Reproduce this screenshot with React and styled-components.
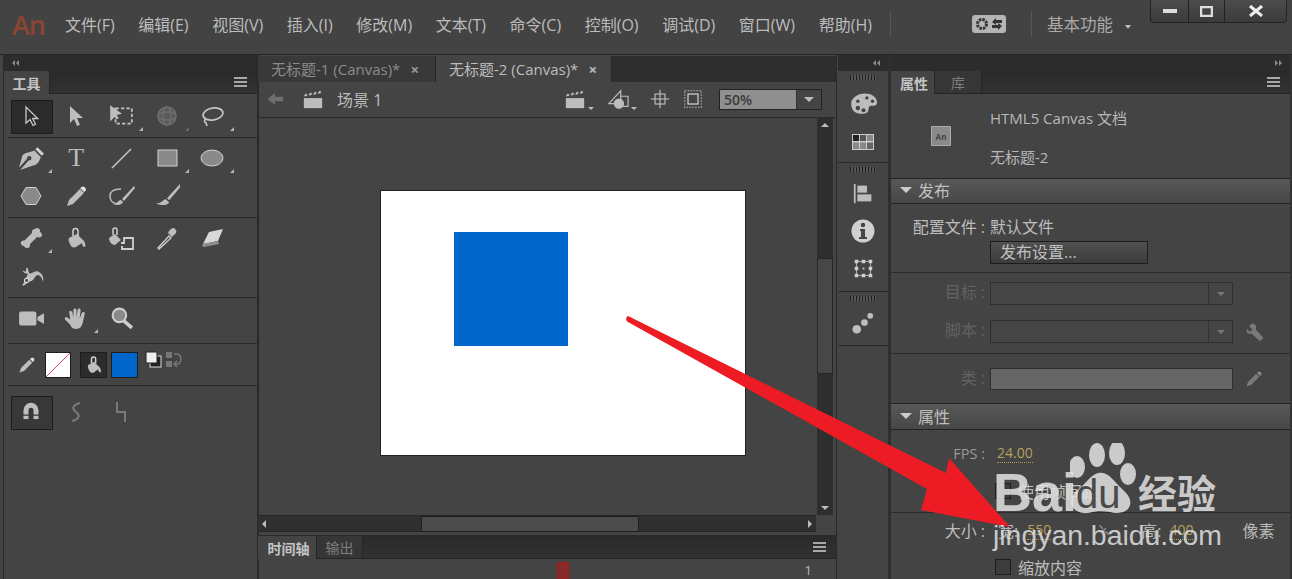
import React from "react";
import styled, { createGlobalStyle } from "styled-components";

const GlobalStyle = createGlobalStyle`
  html, body { margin: 0; padding: 0; background: #444; }
  body { font-family: "Open Sans", "Noto Sans CJK SC", sans-serif; }
  * { box-sizing: border-box; }
`;

const Window = styled.div`
  position: relative;
  width: 1292px;
  height: 579px;
  overflow: hidden;
  background: #444;
  color: #bdbdbd;
`;

/* top menu bar */
const TitleBar = styled.header`
  display: flex;
  align-items: center;
  height: 55px;
  padding: 0 5px 6px 12px;
  background: #434343;
  border-bottom: 1px solid #262626;
`;
const Logo = styled.span`
  width: 53px;
  font: 600 27px "Open Sans", sans-serif;
  letter-spacing: -1px;
  color: #8e4433;
`;
const Menu = styled.nav`
  display: flex;
  gap: 23.6px;
  width: 826px;
  font-size: 16px;
  color: #bcbcbc;
`;
const BarDivider = styled.i`
  width: 1px;
  height: 26px;
  background: #555;
`;
const SyncButton = styled.span`
  display: flex;
  align-items: center;
  justify-content: center;
  width: 34px;
  height: 18px;
  margin: 0 25px 0 81px;
  background: #b5b5b5;
  border-radius: 3px;
`;
const Workspace = styled.span`
  margin-left: 15px;
  width: 103px;
  font-size: 16.5px;
  color: #a9a9a9;
  &::after {
    content: "";
    display: inline-block;
    margin-left: 12px;
    vertical-align: 2px;
    border: 3.5px solid transparent;
    border-top: 4px solid #bbb;
    border-bottom: 0;
  }
`;
const WinControls = styled.div`
  display: flex;
  align-self: flex-start;
  height: 23px;
  margin-left: auto;
  border: 1px solid #222;
  border-top: 0;
  border-radius: 0 0 4px 4px;
  background: linear-gradient(#4c4c4c, #3b3b3b);
`;
const WinButton = styled.span`
  display: flex;
  align-items: center;
  justify-content: center;
  width: ${(p) => p.$w}px;
  border-left: ${(p) => (p.$first ? "0" : "1px solid #222")};
`;

const Main = styled.div`
  display: flex;
  height: 524px;
`;

/* shared panel chrome */
const Strip = styled.div`
  display: flex;
  align-items: center;
  justify-content: ${(p) => (p.$end ? "flex-end" : "flex-start")};
  gap: 1px;
  height: 16px;
  padding: 0 8px;
  background: #2c2c2c;
`;
const TabRow = styled.div`
  display: flex;
  align-items: stretch;
  height: 23px;
  background: linear-gradient(#2a2a2a, #323232);
  border-bottom: 1px solid #262626;
`;
const PanelTab = styled.span`
  display: flex;
  align-items: center;
  justify-content: center;
  width: ${(p) => p.$w}px;
  padding-left: ${(p) => p.$pl || 0}px;
  margin-bottom: ${(p) => (p.$on ? "-1px" : "0")};
  font-size: 14px;
  font-weight: ${(p) => (p.$on ? 700 : 400)};
  color: ${(p) => (p.$on ? "#c4c4c4" : "#7e7e7e")};
  background: ${(p) => (p.$on ? "#444" : "#363636")};
  border-right: 1px solid #262626;
`;
const MenuLines = styled.i`
  align-self: center;
  width: 13px;
  height: 10px;
  margin: 0 10px 0 auto;
  background: repeating-linear-gradient(#a8a8a8 0 2px, transparent 2px 4px);
`;

/* tools panel */
const ToolsPanel = styled.aside`
  width: 256px;
  margin-left: 3px;
  border-right: 2px solid #2a2a2a;
  border-left: 1px solid #2a2a2a;
`;
const ToolGroup = styled.section`
  display: grid;
  grid-template-columns: repeat(5, 45.4px);
  grid-auto-rows: 38px;
  height: ${(p) => p.$h}px;
  padding-top: ${(p) => p.$pt}px;
  margin-left: 4px;
  border-bottom: ${(p) => (p.$last ? "0" : "1px solid #2a2a2a")};
`;
const ToolCell = styled.span`
  position: relative;
  display: flex;
  align-items: center;
  justify-content: center;
  opacity: ${(p) => (p.$dim ? 0.35 : 1)};
  &::before {
    content: "";
    display: ${(p) => (p.$active ? "block" : "none")};
    position: absolute;
    left: 2.7px;
    top: 3px;
    width: 40px;
    height: 32px;
    background: ${(p) => (p.$active === "soft" ? "#383838" : "#2b2b2b")};
    border: 1px solid #1c1c1c;
  }
  &::after {
    content: "";
    display: ${(p) => (p.$corner ? "block" : "none")};
    position: absolute;
    right: 1px;
    bottom: 4px;
    border-left: 4px solid transparent;
    border-bottom: 4px solid #b5b5b5;
  }
  svg, b { position: relative; }
`;
const LetterT = styled.b`
  font: 400 26px "Liberation Serif", serif;
  color: #bcbcbc;
`;
const ColorRow = styled.section`
  display: flex;
  align-items: center;
  height: 42px;
  padding-left: 10px;
  margin-left: 4px;
  border-bottom: 1px solid #2a2a2a;
`;
const Swatch = styled.span`
  display: flex;
  align-items: center;
  justify-content: center;
  width: ${(p) => p.$w || 27}px;
  height: 26px;
  margin-left: ${(p) => p.$ml || 0}px;
  background: ${(p) => p.$bg};
  border: 1px solid #1d1d1d;
`;
const SmallIcons = styled.span`
  display: flex;
  gap: 3px;
  margin: -10px 0 0 7px;
`;

/* document column */
const DocColumn = styled.main`
  display: flex;
  flex-direction: column;
  width: 579px;
  margin-left: -1px;
  border-right: 1px solid #2a2a2a;
`;
const DocTabs = styled.div`
  display: flex;
  height: 26px;
  margin-top: 1px;
  background: #2e2e2e;
`;
const DocTab = styled.span`
  display: flex;
  align-items: center;
  width: ${(p) => p.$w}px;
  padding-left: 13px;
  font-size: 15px;
  white-space: nowrap;
  color: ${(p) => (p.$on ? "#bdbdbd" : "#8b8b8b")};
  background: ${(p) => (p.$on ? "#444" : "#393939")};
  border-right: 1px solid #262626;
  b { margin-left: 10px; font-size: 15px; color: ${(p) => (p.$on ? "#bbb" : "#999")}; }
`;
const DocToolbar = styled.div`
  display: flex;
  align-items: center;
  height: 36px;
  padding: 0 14px 0 8px;
  border-bottom: 1px solid #2a2a2a;
`;
const SceneClapper = styled.span`
  display: flex;
  margin-left: 18px;
`;
const SceneName = styled.span`
  margin-left: 13px;
  font-size: 16px;
  color: #bdbdbd;
`;
const ToolbarRight = styled.div`
  display: flex;
  align-items: center;
  gap: 13px;
  margin-left: auto;
`;
const WithCaret = styled.span`
  display: flex;
  align-items: flex-end;
  gap: 2px;
  padding-bottom: 1px;
`;
const Zoom = styled.div`
  display: flex;
  width: 103px;
  height: 21px;
  margin-left: 3px;
  border: 1px solid #222;
`;
const ZoomValue = styled.span`
  flex: 1;
  padding-left: 4px;
  font-size: 14px;
  line-height: 19px;
  font-weight: 600;
  color: #3a3a3a;
  background: #8f8f8f;
`;
const ZoomDrop = styled.span`
  display: flex;
  align-items: center;
  justify-content: center;
  width: 25px;
  background: #444;
  border-left: 1px solid #333;
`;
const Tri = styled.i`
  width: 0;
  height: 0;
  border: ${(p) => p.$s || 4}px solid transparent;
  ${(p) => `border-${p.$dir || "top"}-color: ${p.$c || "#bbb"};`}
  border-${(p) => ({ top: "bottom", bottom: "top", left: "right", right: "left" }[p.$dir || "top"])}-width: 0;
`;
const CanvasRow = styled.div`
  display: flex;
  height: 399px;
`;
const Stage = styled.div`
  flex: 1;
  padding: 72px 0 0 122px;
`;
const Artboard = styled.div`
  width: 366px;
  height: 266px;
  padding: 41px 0 0 73px;
  background: #fff;
  border: 1px solid #222;
`;
const BlueSquare = styled.div`
  width: 114px;
  height: 114px;
  background: #0066cc;
`;
const VScroll = styled.div`
  display: flex;
  flex-direction: column;
  align-items: center;
  justify-content: space-between;
  width: 19px;
  padding: 5px 3px 5px 0;
  background: linear-gradient(90deg, #2e2e2e 0 16px, #444 16px);
`;
const VThumb = styled.div`
  width: 16px;
  height: 116px;
  margin: 131px 0 auto;
  background: #474747;
  border: 1px solid #262626;
`;
const HScrollRow = styled.div`
  display: flex;
  height: 17px;
`;
const HScroll = styled.div`
  display: flex;
  align-items: center;
  justify-content: space-between;
  width: 558px;
  padding: 0 4px;
  background: #303030;
  border-top: 1px solid #262626;
  border-bottom: 1px solid #262626;
`;
const HThumb = styled.div`
  width: 218px;
  height: 16px;
  margin: 0 auto 0 155px;
  background: #4c4c4c;
  border: 1px solid #1e1e1e;
`;
const Timeline = styled.div`
  margin-top: 3px;
  border-top: 1px solid #2a2a2a;
`;
const Ruler = styled.div`
  display: flex;
  justify-content: space-between;
  height: 20px;
  padding: 2px 24px 0 299px;
  font-size: 13px;
  color: #bbb;
`;
const PlayHead = styled.i`
  width: 12px;
  height: 18px;
  margin-top: 1px;
  background: #862a2a;
  border: 2px solid #982222;
`;

/* icon dock */
const Dock = styled.div`
  width: 53px;
  margin-left: 1px;
  border-right: 3px solid #2f2f2f;
`;
const DockGroup = styled.section`
  display: flex;
  flex-direction: column;
  align-items: center;
  height: ${(p) => p.$h}px;
  padding-top: 4px;
  gap: ${(p) => p.$gap || 0}px;
  border-bottom: 1px solid #2a2a2a;
`;
const Gripper = styled.i`
  width: 26px;
  height: 5px;
  margin-bottom: ${(p) => p.$mb}px;
  background: repeating-linear-gradient(90deg, #1d1d1d 0 1px, #555 1px 3px);
`;

/* properties panel */
const Props = styled.aside`
  flex: 1;
  border-right: 2px solid #333;
`;
const DocInfo = styled.div`
  display: flex;
  align-items: center;
  height: 84px;
  padding-left: 40px;
`;
const DocBadge = styled.span`
  display: flex;
  align-items: center;
  justify-content: center;
  width: 20px;
  height: 20px;
  font: 700 8px "Open Sans", sans-serif;
  color: #444;
  background: #8a8a8a;
  border: 1px solid #aaa;
`;
const DocInfoText = styled.div`
  display: flex;
  flex-direction: column;
  gap: 20px;
  margin-left: 39px;
  padding-top: 3px;
  font-size: 15px;
  line-height: 19px;
  color: #b8b8b8;
`;
const SectionHead = styled.h3`
  display: flex;
  align-items: center;
  gap: 6px;
  height: ${(p) => p.$h}px;
  margin: 0;
  padding: 0 0 2px 9px;
  font-size: 16px;
  font-weight: 400;
  color: #c0c0c0;
  background: linear-gradient(#585858, #474747);
  border-top: 1px solid #222;
  border-bottom: 1px solid #222;
`;
const Block = styled.div`
  height: ${(p) => p.$h}px;
  padding-top: ${(p) => p.$pt || 0}px;
  border-bottom: ${(p) => (p.$open ? "0" : "1px solid #2b2b2b")};
`;
const Row = styled.div`
  display: flex;
  align-items: center;
  height: ${(p) => p.$h || 22}px;
  margin-bottom: ${(p) => p.$mb || 0}px;
  font-size: 16px;
  color: #bdbdbd;
`;
const labelColors = { off: "#626262", mid: "#9a9a9a", on: "#bdbdbd" };
const Label = styled.span`
  width: 94px;
  margin-right: 5px;
  padding-bottom: ${(p) => (p.$tone === "off" ? 5 : 0)}px;
  text-align: right;
  white-space: nowrap;
  font-size: ${(p) => (p.$tone === "mid" ? 14.5 : 16)}px;
  color: ${(p) => labelColors[p.$tone || "on"]};
`;
const PubButton = styled.span`
  width: 158px;
  height: 23px;
  padding-left: 9px;
  font-size: 16px;
  line-height: 21px;
  color: #c0c0c0;
  background: linear-gradient(#505050, #3c3c3c);
  border: 1px solid #1c1c1c;
`;
const Select = styled.span`
  display: flex;
  justify-content: flex-end;
  width: 243px;
  height: 23px;
  background: #454545;
  border: 1px solid #2e2e2e;
`;
const SelectDrop = styled.span`
  display: flex;
  align-items: center;
  justify-content: center;
  width: 24px;
  border-left: 1px solid #333;
`;
const ClassInput = styled.span`
  width: 243px;
  height: 22px;
  background: #666;
  border: 1px solid #2e2e2e;
`;
const RowIcon = styled.span`
  display: flex;
  margin-left: 12px;
  opacity: 0.45;
`;
const Value = styled.span`
  font-size: 14px;
  color: #b5a15f;
  border-bottom: 1px dotted #b39a55;
  margin-left: ${(p) => p.$ml || 0}px;
`;
const Check = styled.i`
  width: 16px;
  height: 16px;
  margin: 0 7px 0 5px;
  background: #3c3c3c;
  border: 1px solid #1e1e1e;
`;
const SizeText = styled.span`
  display: flex;
  margin-left: ${(p) => p.$ml || 0}px;
  color: #b8b8b8;
`;

/* overlays: the arrow and the watermark lie over the screenshot */
const ArrowLayer = styled.svg`
  position: absolute;
  inset: 0;
  pointer-events: none;
`;
const Mark = styled.div`
  position: absolute;
  left: 993px;
  top: 443px;
  width: 240px;
  height: 110px;
  color: rgba(226, 226, 226, 0.86);
  pointer-events: none;
`;
const MarkTop = styled.div`
  display: flex;
  align-items: flex-start;
  height: 74px;
  padding-top: 21px;
  font-family: "Liberation Sans", sans-serif;
  font-weight: 700;
`;
const MarkBai = styled.span`
  width: 80px;
  font-size: 54px;
  line-height: 56px;
`;
const Paw = styled.svg`
  position: absolute;
  left: 77px;
  top: 0;
`;
const MarkDu = styled.span`
  position: relative;
  width: 62px;
  margin-left: 3px;
  padding-top: 10px;
  font-size: 40px;
  line-height: 40px;
  font-weight: 400;
  color: #4a4a4a;
`;
const MarkCn = styled.span`
  font: 700 39px/54px "Noto Sans CJK SC", sans-serif;
  white-space: nowrap;
`;
const MarkUrl = styled.div`
  font: 400 28.4px/36px "Liberation Sans", sans-serif;
  white-space: nowrap;
`;

/* drawings */
const Svg = styled.svg.attrs((p) => ({ viewBox: p.$vb || "0 0 24 24" }))`
  width: ${(p) => p.$w || 24}px;
  height: ${(p) => p.$h || p.$w || 24}px;
  fill: ${(p) => p.$f || "#bdbdbd"};
  stroke: ${(p) => p.$st || "none"};
  flex: none;
`;

const SelectionIcon = () => <Svg $f="none" $st="#c8c8c8" strokeWidth="1.3"><path d="M7 3v16l4-3.500 3 6 2.500-1.200-2.800-5.800h5z" /></Svg>;
const SubselectIcon = () => <Svg><path d="M6 2v17l4-4 3 7 3-1.200-3-6.800h6z" /></Svg>;
const FreeTransformIcon = () => (
  <Svg $w={26}>
    <rect x="7" y="5" width="15" height="14" fill="none" stroke="#c4c4c4" strokeWidth="1.6" strokeDasharray="3 2" />
    <path d="M2 2v15l4-4 2 2 2-1-2-3 5-1z" />
  </Svg>
);
const RotateIcon = () => (
  <Svg $f="none" $st="#bbb" strokeWidth="1.5">
    <circle cx="12" cy="12" r="9" fill="#bbb" fillOpacity=".5" />
    <ellipse cx="12" cy="12" rx="9" ry="4" />
    <ellipse cx="12" cy="12" rx="4" ry="9" />
  </Svg>
);
const LassoIcon = () => (
  <Svg $f="none" $st="#c4c4c4" strokeWidth="1.7">
    <ellipse cx="13" cy="10" rx="10" ry="6" transform="rotate(-10 13 10)" />
    <path d="M6 15c-2 1-2 3 0 4l1 3" />
  </Svg>
);
const PenIcon = () => (
  <Svg $w={26}>
    <path d="M18 2l6 6-2 2-6-6z" fill="#d0d0d0" />
    <path fillRule="evenodd" d="M15 5l6 6c-1 4-3 7-7 8l-12 4 8-9a2 2 0 1 0-1.500-1.500L1 21l3-11c1-3 7-3 11-5z" />
  </Svg>
);
const LineIcon = () => <Svg $f="none" $st="#bdbdbd" strokeWidth="1.7"><path d="M3 22L22 3" /></Svg>;
const RectIcon = () => <Svg><rect x="3" y="4" width="19" height="16" fill="#8a8a8a" stroke="#cfcfcf" /></Svg>;
const OvalIcon = () => <Svg><ellipse cx="12" cy="12" rx="11" ry="8" fill="#8a8a8a" stroke="#cfcfcf" /></Svg>;
const HexIcon = () => <Svg><path d="M7 3.500h10l5 8.500-5 8.500H7L2 12z" fill="#8a8a8a" stroke="#cfcfcf" /></Svg>;
const PencilIcon = () => <Svg><path d="M16 5l4 4L9 20l-6 2 2-6z" /><path d="M17 3.500a2 2 0 0 1 4 4l-1 .500-4-4z" fill="#e0e0e0" /></Svg>;
const ArtBrushIcon = () => (
  <Svg $w={28} $vb="0 0 28 24">
    <path d="M27 2L15 15l2 2L28 4zM14 16c-2 0-3 2-5 3-1 .500-3 1-3 1 4 2 9 1 10-2z" />
    <path d="M14 5C8 5 3 7 3 12s3 7 5 7" fill="none" stroke="#bdbdbd" strokeWidth="1.500" />
  </Svg>
);
const BrushIcon = () => (
  <Svg $w={26}>
    <path d="M24 1L12 14l2 2L25 3zM11 15c-2 0-3 2-5 3-1 .500-4 1-4 1 4 2 10 2 12-1z" />
  </Svg>
);
const BoneIcon = () => (
  <Svg><path d="M16 3a3 3 0 0 1 5 3 3 3 0 0 1 1 5c-2 1-3 0-4 0l-7 7c0 2 0 4-3 4a3 3 0 0 1-3-2 3 3 0 0 1-3-4c1-2 3-1 4-2l7-7c0-1-1-3 3-4z" /></Svg>
);
const BucketIcon = () => (
  <Svg>
    <path d="M5 12l8-4 7 7c1 2 2 4 1 6-2 0-3-2-3-4l-6 4c-3 1-5 0-6-3-1-2-2-4-1-6z" />
    <path d="M9 10V5a2.500 2.500 0 0 1 5 0v5" fill="none" stroke="#d0d0d0" strokeWidth="1.500" />
  </Svg>
);
const InkIcon = () => (
  <Svg $w={28} $vb="0 0 28 24">
    <path d="M2 12l6-4 6 6-6 5c-3 0-6-3-6-7z" />
    <path d="M6 9V4a2 2 0 0 1 4 0v5" fill="none" stroke="#d0d0d0" strokeWidth="1.500" />
    <path d="M14 17h3v-5h9v11H15v-3" fill="none" stroke="#cfcfcf" strokeWidth="1.800" />
  </Svg>
);
const DropperIcon = () => (
  <Svg>
    <path d="M3 22l11-12 2 2L4 23z" fill="none" stroke="#d0d0d0" strokeWidth="1.300" />
    <path d="M13 7l4 4 2-2 1-1a3 3 0 0 0-4-5l-2 2z" />
  </Svg>
);
const EraserIcon = () => (
  <Svg>
    <path d="M9 6l14-3-5 12-15 3z" fill="#d8d8d8" />
    <path d="M3 18l15-3 1 3-15 3-2-1z" fill="#8e8e8e" />
  </Svg>
);
const WidthIcon = () => (
  <Svg $w={26}>
    <path d="M8 4c2 1 1 4 3 6 3-1 5-3 8-2 4 2 5 6 4 9-1-3-2-6-5-6-3 1-3 6-8 6-2 2-3 3-5 4l-1-1 3-4c0-3 2-4 2-6-2 0-4-1-5-3l3 1z" />
    <circle cx="8" cy="16" r="2" fill="#444" stroke="#e0e0e0" />
  </Svg>
);
const CameraIcon = () => (
  <Svg $w={26}><rect x="1" y="6" width="16" height="13" rx="2" /><path d="M18 11l7-4v11l-7-4z" /></Svg>
);
const HandIcon = () => (
  <Svg $w={25}>
    <path d="M5 6c0-2 2-2 3 0l1 5V4c0-2 3-2 3 0v7l1-7c0-2 3-2 3 0l-1 8 2-5c1-2 3-1 3 0l-2 9c-1 4-3 6-6 6s-5-1-6-4l-5-5c-1-2 1-3 2-2l3 2z" />
  </Svg>
);
const ZoomIcon = () => (
  <Svg $w={25}>
    <circle cx="10" cy="9" r="6.500" fill="#8a8a8a" stroke="#cdcdcd" strokeWidth="2" />
    <path d="M14 14l8 7" stroke="#cdcdcd" strokeWidth="3.500" />
  </Svg>
);
const MagnetIcon = () => (
  <Svg $w={20}>
    <path d="M3 15v-5a9 9 0 0 1 18 0v5h-6v-5a3 3 0 0 0-6 0v5z" />
    <rect x="3" y="16.500" width="6" height="4" /><rect x="15" y="16.500" width="6" height="4" />
  </Svg>
);
const SmoothIcon = () => <Svg $f="none" $st="#7b7b7b" strokeWidth="2"><path d="M16 3C8 5 8 9 12 12s4 7-4 9" /></Svg>;
const StraightenIcon = () => <Svg $f="none" $st="#7b7b7b" strokeWidth="2"><path d="M8 2v10h8v10" /></Svg>;
const StrokePencil = () => <Svg $w={18}><path d="M15 5l4 4L8 20l-6 2 2-6z" /><path d="M17 3a2.500 2.500 0 0 1 4 4l-1 1-4-4z" fill="#e0e0e0" /></Svg>;
const SmallBucket = () => <Svg $w={20}><path d="M5 12l7-4 7 7c1 2 2 4 1 6-2 0-3-2-3-4l-5 4c-3 1-5 0-6-3-1-2-2-4-1-6z" /><path d="M9 10V5a2.500 2.500 0 0 1 5 0v5" fill="none" stroke="#d0d0d0" strokeWidth="1.800" /></Svg>;
const DefaultColors = () => (
  <Svg $w={17} $vb="0 0 17 17">
    <rect x="5" y="5" width="11" height="11" fill="#222" stroke="#ddd" />
    <rect x="1" y="1" width="11" height="11" fill="#eee" stroke="#222" />
  </Svg>
);
const SwapColors = () => (
  <Svg $w={17} $vb="0 0 17 17" $f="#777">
    <rect x="1" y="1" width="6" height="6" /><rect x="1" y="10" width="6" height="6" />
    <path d="M9 3h3c5 0 5 10 0 10H10M12 10l-3 3 3 3" fill="none" stroke="#777" strokeWidth="1.500" />
  </Svg>
);
const BackIcon = () => <Svg $w={18} $f="#6f6f6f"><path d="M2 12l10-8v5h11v6H12v5z" /></Svg>;
const Clapper = ({ w = 22 }) => (
  <Svg $w={w}>
    <path d="M2 11h20v11H2z" /><path d="M2 9l2-3 2 1-1 2zm5-1l2-3 2 1-1 2zm5-1l2-3 2 1-1 2zm5-1l2-3 2 1-1 2z" />
  </Svg>
);
const ObjectIcon = () => (
  <Svg $w={22} $f="none" $st="#bdbdbd" strokeWidth="1.300">
    <path d="M2 17L15 3v14zM15 9h8v11h-8" /><circle cx="13" cy="17" r="5" fill="#bdbdbd" />
  </Svg>
);
const CenterIcon = () => (
  <Svg $w={20} $f="none" $st="#c4c4c4" strokeWidth="1.300"><rect x="6" y="6" width="12" height="12" /><path d="M12 1v22M1 12h22" /></Svg>
);
const ClipIcon = () => (
  <Svg $w={20} $f="none" $st="#9a9a9a" strokeWidth="1.500">
    <rect x="2" y="2" width="20" height="20" strokeDasharray="2 1.500" />
    <rect x="6" y="6" width="12" height="12" stroke="#d0d0d0" />
  </Svg>
);
const PaletteIcon = () => (
  <Svg $w={27}>
    <path d="M13 3c6 0 11 3 11 8 0 3-3 3-5 3-3 0-2 3-3 5s-4 2-7 2C4 21 1 17 1 12s6-9 12-9z" />
    <g fill="#444"><circle cx="7" cy="16" r="2" /><circle cx="12" cy="18" r="1.800" /><circle cx="7" cy="10" r="1.500" /><circle cx="15" cy="7" r="1.500" /><circle cx="20" cy="10" r="1.500" /></g>
  </Svg>
);
const SwatchIcon = () => (
  <Svg $w={22} $vb="0 0 22 16" $h={16}>
    <rect width="22" height="16" fill="#ccc" />
    <rect x="1" y="1" width="6" height="6" fill="#222" /><rect x="8" y="1" width="6" height="6" fill="#555" /><rect x="15" y="1" width="6" height="6" fill="#888" />
    <rect x="1" y="8.500" width="6" height="6.500" fill="#888" /><rect x="8" y="8.500" width="6" height="6.500" fill="#888" /><rect x="15" y="8.500" width="6" height="6.500" fill="#666" />
  </Svg>
);
const AlignIcon = () => (
  <Svg $w={21}><rect x="1" y="1" width="2" height="22" /><rect x="5" y="3" width="11" height="8" /><rect x="5" y="13" width="16" height="8" /></Svg>
);
const InfoIcon = () => (
  <Svg $w={24}>
    <circle cx="12" cy="12" r="11.500" fill="#d0d0d0" />
    <circle cx="12" cy="6" r="2.200" fill="#444" /><path d="M9 10h5v8h2v2H8v-2h2v-6H9z" fill="#444" />
  </Svg>
);
const TransformIcon = () => (
  <Svg $w={21} $f="#cfcfcf">
    <rect x="4" y="4" width="16" height="16" fill="none" stroke="#bbb" />
    <rect x="2" y="2" width="4" height="4" /><rect x="10" y="2" width="4" height="4" /><rect x="18" y="2" width="4" height="4" />
    <rect x="2" y="10" width="4" height="4" /><rect x="18" y="10" width="4" height="4" /><rect x="11" y="11" width="2" height="2" />
    <rect x="2" y="18" width="4" height="4" /><rect x="10" y="18" width="4" height="4" /><rect x="18" y="18" width="4" height="4" />
  </Svg>
);
const DotsIcon = () => (
  <Svg $w={23}><circle cx="5" cy="19" r="4.500" /><circle cx="13" cy="12" r="3.500" /><circle cx="19" cy="5" r="3" /></Svg>
);
const WrenchIcon = () => (
  <Svg $w={20}><path d="M8 2L5 5l4 4-3 3-4-4c-1 4 2 7 6 6l10 9 4-4-9-10c1-4-1-8-5-7z" /></Svg>
);
const LinkIcon = () => (
  <Svg $w={14} $f="none" $st="#8f8f8f" strokeWidth="2.500"><path d="M4 4l6 6M14 14l6 6M9 15l6-6" /></Svg>
);
const SyncIcon = () => (
  <Svg $w={28} $h={14} $vb="0 0 28 14" $f="#333">
    <circle cx="7" cy="7" r="4.500" fill="none" stroke="#333" strokeWidth="3" strokeDasharray="2.500 1" />
    <path d="M17 5l4-4v2h6v3h-6v2zM27 9l-4 4v-2h-6V8h6V6z" />
  </Svg>
);

const Tool = ({ children, corner, active, dim }) => (
  <ToolCell $corner={corner} $active={active} $dim={dim}>{children}</ToolCell>
);

const Chevrons = ({ dir }) => (
  <>
    <Tri $dir={dir} $s={3} $c="#8c8c8c" />
    <Tri $dir={dir} $s={3} $c="#8c8c8c" />
  </>
);

const menuItems = ["文件(F)", "编辑(E)", "视图(V)", "插入(I)", "修改(M)", "文本(T)", "命令(C)", "控制(O)", "调试(D)", "窗口(W)", "帮助(H)"];

export default function App() {
  return (
    <Window>
      <GlobalStyle />
      <TitleBar>
        <Logo>An</Logo>
        <Menu>{menuItems.map((m) => <span key={m}>{m}</span>)}</Menu>
        <BarDivider />
        <SyncButton><SyncIcon /></SyncButton>
        <BarDivider />
        <Workspace>基本功能</Workspace>
        <WinControls>
          <WinButton $w={37} $first><Svg $w={14} $h={4} $vb="0 0 14 4" $f="#ddd"><rect width="14" height="4" /></Svg></WinButton>
          <WinButton $w={36}><Svg $w={13} $h={11} $vb="0 0 13 11" $f="none" $st="#ddd" strokeWidth="2.500"><rect x="1" y="1" width="11" height="9" /></Svg></WinButton>
          <WinButton $w={62}><Svg $w={14} $h={12} $vb="0 0 14 12" $f="none" $st="#eee" strokeWidth="3"><path d="M1 1l12 10M13 1L1 11" /></Svg></WinButton>
        </WinControls>
      </TitleBar>

      <Main>
        <ToolsPanel>
          <Strip><Chevrons dir="right" /></Strip>
          <TabRow>
            <PanelTab $w={46} $on>工具</PanelTab>
            <MenuLines />
          </TabRow>
          <ToolGroup $h={44} $pt={3}>
            <Tool active="dark"><SelectionIcon /></Tool>
            <Tool><SubselectIcon /></Tool>
            <Tool corner><FreeTransformIcon /></Tool>
            <Tool corner dim><RotateIcon /></Tool>
            <Tool corner><LassoIcon /></Tool>
          </ToolGroup>
          <ToolGroup $h={80} $pt={1}>
            <Tool corner><PenIcon /></Tool>
            <Tool><LetterT>T</LetterT></Tool>
            <Tool><LineIcon /></Tool>
            <Tool corner><RectIcon /></Tool>
            <Tool corner><OvalIcon /></Tool>
            <Tool><HexIcon /></Tool>
            <Tool><PencilIcon /></Tool>
            <Tool><ArtBrushIcon /></Tool>
            <Tool><BrushIcon /></Tool>
          </ToolGroup>
          <ToolGroup $h={80} $pt={1}>
            <Tool corner><BoneIcon /></Tool>
            <Tool><BucketIcon /></Tool>
            <Tool><InkIcon /></Tool>
            <Tool><DropperIcon /></Tool>
            <Tool><EraserIcon /></Tool>
            <Tool><WidthIcon /></Tool>
          </ToolGroup>
          <ToolGroup $h={46} $pt={1}>
            <Tool><CameraIcon /></Tool>
            <Tool corner><HandIcon /></Tool>
            <Tool><ZoomIcon /></Tool>
          </ToolGroup>
          <ColorRow>
            <StrokePencil />
            <Swatch $bg="linear-gradient(to top left, #fff 48%, #e0405a 48%, #e0405a 52%, #fff 52%)" $w={26} $ml={9} />
            <Swatch $bg="#2c2c2c" $ml={9}><SmallBucket /></Swatch>
            <Swatch $bg="#0066cc" $ml={4} />
            <SmallIcons><DefaultColors /><SwapColors /></SmallIcons>
          </ColorRow>
          <ToolGroup $h={60} $pt={7} $last>
            <Tool active="soft"><MagnetIcon /></Tool>
            <Tool><SmoothIcon /></Tool>
            <Tool><StraightenIcon /></Tool>
          </ToolGroup>
        </ToolsPanel>

        <DocColumn>
          <DocTabs>
            <DocTab $w={178}>无标题-1 (Canvas)*<b>×</b></DocTab>
            <DocTab $w={176} $on>无标题-2 (Canvas)*<b>×</b></DocTab>
          </DocTabs>
          <DocToolbar>
            <BackIcon />
            <SceneClapper><Clapper /></SceneClapper>
            <SceneName>场景 1</SceneName>
            <ToolbarRight>
              <WithCaret><Clapper /><Tri $s={3} /></WithCaret>
              <WithCaret><ObjectIcon /><Tri $s={3} /></WithCaret>
              <CenterIcon />
              <ClipIcon />
              <Zoom>
                <ZoomValue>50%</ZoomValue>
                <ZoomDrop><Tri $s={5} /></ZoomDrop>
              </Zoom>
            </ToolbarRight>
          </DocToolbar>
          <CanvasRow>
            <Stage>
              <Artboard><BlueSquare /></Artboard>
            </Stage>
            <VScroll>
              <Tri $dir="bottom" $s={4} />
              <VThumb />
              <Tri $dir="top" $s={4} />
            </VScroll>
          </CanvasRow>
          <HScrollRow>
            <HScroll>
              <Tri $dir="right" $s={4} />
              <HThumb />
              <Tri $dir="left" $s={4} />
            </HScroll>
          </HScrollRow>
          <Timeline>
            <TabRow>
              <PanelTab $w={59} $pl={3} $on>时间轴</PanelTab>
              <PanelTab $w={46}>输出</PanelTab>
              <MenuLines />
            </TabRow>
            <Ruler>
              <PlayHead />
              <span>1</span>
            </Ruler>
          </Timeline>
        </DocColumn>

        <Dock>
          <Strip $end><Chevrons dir="right" /></Strip>
          <DockGroup $h={92} $gap={17}>
            <Gripper $mb={-7} />
            <PaletteIcon />
            <SwatchIcon />
          </DockGroup>
          <DockGroup $h={129} $gap={15}>
            <Gripper $mb={-4} />
            <AlignIcon />
            <InfoIcon />
            <TransformIcon />
          </DockGroup>
          <DockGroup $h={54} $gap={6}>
            <Gripper $mb={4} />
            <DotsIcon />
          </DockGroup>
        </Dock>

        <Props>
          <Strip $end><Chevrons dir="left" /></Strip>
          <TabRow>
            <PanelTab $w={44} $pl={3} $on>属性</PanelTab>
            <PanelTab $w={47}>库</PanelTab>
            <MenuLines />
          </TabRow>
          <DocInfo>
            <DocBadge>An</DocBadge>
            <DocInfoText>
              <span>HTML5 Canvas 文档</span>
              <span>无标题-2</span>
            </DocInfoText>
          </DocInfo>
          <SectionHead $h={26}><Tri $s={6} $c="#ccc" />发布</SectionHead>
          <Block $h={69} $pt={12}>
            <Row $h={20} $mb={5}><Label>配置文件 :</Label>默认文件</Row>
            <Row $h={23}><Label /><PubButton>发布设置...</PubButton></Row>
          </Block>
          <Block $h={81} $pt={9}>
            <Row $h={23} $mb={15}>
              <Label $tone="off">目标 :</Label>
              <Select><SelectDrop><Tri $c="#777" /></SelectDrop></Select>
            </Row>
            <Row $h={23}>
              <Label $tone="off">脚本 :</Label>
              <Select><SelectDrop><Tri $c="#777" /></SelectDrop></Select>
              <RowIcon><WrenchIcon /></RowIcon>
            </Row>
          </Block>
          <Block $h={49} $pt={14} $open>
            <Row $h={22}>
              <Label $tone="off">类 :</Label>
              <ClassInput />
              <RowIcon><StrokePencil /></RowIcon>
            </Row>
          </Block>
          <SectionHead $h={27}><Tri $s={6} $c="#ccc" />属性</SectionHead>
          <Block $h={83} $pt={13}>
            <Row $h={20} $mb={18}>
              <Label $tone="mid">FPS :</Label>
              <Value $ml={7}>24.00</Value>
            </Row>
            <Row $h={20}>
              <Label />
              <Check />使用帧间距
            </Row>
          </Block>
          <Block $h={70} $pt={7} $open>
            <Row $h={20} $mb={17}>
              <Label>大小 :</Label>
              <SizeText $ml={8}>宽:</SizeText>
              <Value $ml={9}>550</Value>
              <SizeText $ml={46}><LinkIcon /></SizeText>
              <SizeText $ml={30}>高:</SizeText>
              <Value $ml={8}>400</Value>
              <SizeText $ml={49}>像素</SizeText>
            </Row>
            <Row $h={20}>
              <Label />
              <Check />缩放内容
            </Row>
          </Block>
        </Props>
      </Main>

      <ArrowLayer width="1292" height="579" viewBox="0 0 1292 579">
        <path
          d="M628 316 C625 318 626 321 628 322 L927 489 L921 510 L1010 527 L949 458 L946 473 Z"
          fill="#ed1c24"
        />
      </ArrowLayer>

      <Mark>
        <Paw width="70" height="74" viewBox="0 0 70 74" fill="rgba(226,226,226,.86)">
          <ellipse cx="7" cy="24" rx="8" ry="11" />
          <ellipse cx="27" cy="12" rx="8" ry="12" />
          <ellipse cx="47" cy="10" rx="8" ry="12" />
          <ellipse cx="58" cy="31" rx="8" ry="11" />
          <path d="M28 30c8-2 14 5 20 12 7 7 14 12 12 20-2 8-12 9-20 7-8-1-14-1-22 1-8 1-16-3-17-10-1-7 5-12 10-16s10-12 17-14z" />
        </Paw>
        <MarkTop>
          <MarkBai>Bai</MarkBai>
          <MarkDu>du</MarkDu>
          <MarkCn>经验</MarkCn>
        </MarkTop>
        <MarkUrl>jingyan.baidu.com</MarkUrl>
      </Mark>
    </Window>
  );
}
